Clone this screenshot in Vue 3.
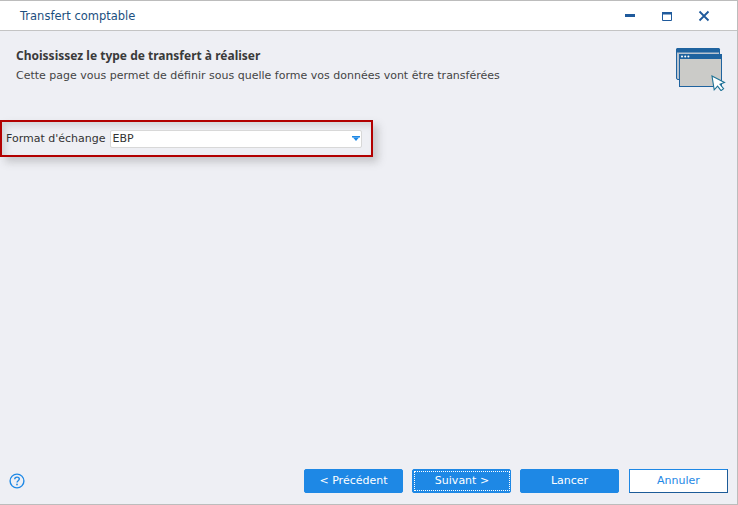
<script setup>
const buttons = [
  { label: '< Précédent', kind: 'primary' },
  { label: 'Suivant >', kind: 'primary focus' },
  { label: 'Lancer', kind: 'primary' },
  { label: 'Annuler', kind: 'ghost' },
]
</script>

<template>
  <div class="window">
    <header class="titlebar">
      <span class="title">Transfert comptable</span>
      <div class="controls">
        <svg width="12" height="12" viewBox="0 0 12 12"><rect x="1" y="4" width="10" height="3" fill="#1f5a9c"/></svg>
        <svg width="12" height="12" viewBox="0 0 12 12"><path d="M1.5 2.5h9v8h-9z" fill="none" stroke="#1f5a9c"/><rect x="1" y="2" width="10" height="2.5" fill="#1f5a9c"/></svg>
        <svg width="12" height="12" viewBox="0 0 12 12"><path d="M1.5 1.5l9 9M10.5 1.5l-9 9" stroke="#1f5a9c" stroke-width="1.8" fill="none"/></svg>
      </div>
    </header>
    <main class="body">
      <section class="head">
        <div>
          <h1>Choississez le type de transfert à réaliser</h1>
          <p>Cette page vous permet de définir sous quelle forme vos données vont être transférées</p>
        </div>
        <svg class="hero" width="50" height="43" viewBox="0 0 50 43">
          <rect x="0.5" y="0.5" width="43" height="31" rx="1.5" fill="#b9c4d0" stroke="#1f639f"/>
          <rect x="0" y="0" width="44" height="4.5" rx="1.5" fill="#1f639f"/>
          <rect x="3.5" y="6.5" width="42" height="32" fill="#cbcbc8" stroke="#1f639f"/>
          <rect x="3" y="6" width="43" height="5" rx="1" fill="#1f639f"/>
          <circle cx="6" cy="8.5" r="1" fill="#fff"/><circle cx="9.2" cy="8.5" r="1" fill="#fff"/><circle cx="12.4" cy="8.5" r="1" fill="#fff"/>
          <path d="M36 28l12.5 6.5-4.5 1.8 3.6 4.4-2.6 2-3.4-4.5-3.4 3.6z" fill="#fff" stroke="#1f7396" stroke-width="1.1"/>
        </svg>
      </section>
      <div class="highlight">
        <label>Format d'échange</label>
        <div class="select">
          <span>EBP</span>
          <svg width="8" height="5" viewBox="0 0 8 5"><rect width="8" height="1.5" fill="#1e88e5"/><path d="M1 1.5h6L4 5z" fill="#1e88e5"/></svg>
        </div>
      </div>
      <footer class="footer">
        <svg class="help" width="16" height="16" viewBox="0 0 16 16">
          <circle cx="8" cy="8" r="6.9" fill="none" stroke="#1e88e5" stroke-width="1.4"/>
          <path d="M5.7 6.3c0-1.4 1-2.2 2.3-2.2s2.3.8 2.3 2c0 1.6-2.3 1.7-2.3 3.4" fill="none" stroke="#1e88e5" stroke-width="1.4"/>
          <rect x="7.2" y="10.7" width="1.6" height="1.6" fill="#1e88e5"/>
        </svg>
        <div class="actions">
          <button v-for="b in buttons" :key="b.label" :class="b.kind"><span>{{ b.label }}</span></button>
        </div>
      </footer>
    </main>
  </div>
</template>

<style>
html, body { margin: 0; background: #eeeff4; }
</style>

<style scoped>
.window {
  box-sizing: border-box;
  width: 738px;
  height: 505px;
  display: flex;
  flex-direction: column;
  border: 1px solid #bcbcbc;
  border-left: 0;
  font-family: "DejaVu Sans", sans-serif;
  font-size: 11px;
  color: #333;
  background: #eeeff4;
}
.titlebar {
  box-sizing: border-box;
  flex: none;
  height: 30px;
  display: flex;
  align-items: center;
  justify-content: space-between;
  padding: 0 27px 0 20px;
  background: #fff;
  border-bottom: 1px solid #c4c4c4;
}
.title { color: #1c4f80; font-size: 11.5px; }
.controls { display: flex; gap: 25px; }
.body { flex: 1; display: flex; flex-direction: column; min-height: 0; }
.head {
  display: flex;
  justify-content: space-between;
  align-items: flex-start;
  padding: 16px 11px 0 16px;
  height: 73px;
  box-sizing: border-box;
}
h1 { margin: 0 0 4px; font-family: "Noto Sans", sans-serif; font-size: 12px; line-height: 17px; font-weight: 700; color: #3a3a3a; }
p { margin: 0; line-height: 16px; color: #444; }
.hero { margin-top: 1px; }
.highlight {
  box-sizing: border-box;
  margin-top: 16px;
  width: 373px;
  height: 37px;
  display: flex;
  align-items: center;
  gap: 4px;
  padding: 0 9px 0 4px;
  border: 2px solid #b20000;
  box-shadow: 5px 5px 8px rgba(90, 90, 90, .28), inset 4px 4px 6px rgba(90, 90, 90, .18);
}
label { white-space: nowrap; }
.select {
  box-sizing: border-box;
  flex: 1;
  height: 18px;
  display: flex;
  align-items: center;
  justify-content: space-between;
  padding: 0 1px 0 2px;
  background: #fff;
  border: 1px solid #d8d8d8;
  border-radius: 2px;
}
.footer {
  margin-top: auto;
  display: flex;
  align-items: center;
  justify-content: space-between;
  padding: 0 9px 11px 9px;
}
.actions { display: flex; gap: 9px; }
button {
  box-sizing: border-box;
  width: 99px;
  height: 24px;
  padding: 0 0 1px;
  font: inherit;
  border-radius: 2px;
  cursor: pointer;
}
.primary { background: #1e88e5; color: #fff; border: 1px solid #1e88e5; }
.focus { padding: 2px 1px 2px 2px; }
.focus span { display: flex; align-items: center; justify-content: center; height: 100%; padding-bottom: 1px; box-sizing: border-box; outline: 1px dotted #fff; }
.ghost { background: #fff; color: #1e88e5; border: 1px solid #1e88e5; border-right-color: #1c5b98; border-bottom-color: #1c5b98; border-radius: 0; margin-left: 1px; }
</style>
